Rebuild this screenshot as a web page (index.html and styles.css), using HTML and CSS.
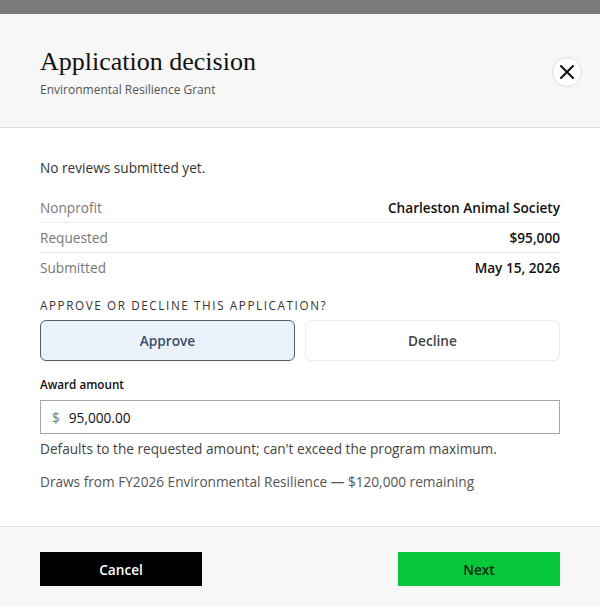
FILE: index.html
```html
<!DOCTYPE html>
<html lang="en">
<head>
<meta charset="utf-8">
<title>Application decision</title>
<link rel="stylesheet" href="styles.css">
</head>
<body>
<div class="modal">
  <header class="modal-header">
    <div class="heading">
      <h1 class="title">Application decision</h1>
      <p class="subtitle">Environmental Resilience Grant</p>
    </div>
    <button class="close" aria-label="Close">
      <svg width="14" height="14" viewBox="0 0 14 14"><path d="M1 1 L13 13 M13 1 L1 13" stroke="#111" stroke-width="2" stroke-linecap="round" fill="none"/></svg>
    </button>
  </header>
  <main class="modal-body">
    <p class="empty">No reviews submitted yet.</p>
    <dl class="facts">
      <div class="fact"><dt>Nonprofit</dt><dd>Charleston Animal Society</dd></div>
      <div class="fact"><dt>Requested</dt><dd>$95,000</dd></div>
      <div class="fact"><dt>Submitted</dt><dd>May 15, 2026</dd></div>
    </dl>
    <p class="question">APPROVE OR DECLINE THIS APPLICATION?</p>
    <div class="choices">
      <button class="choice selected">Approve</button>
      <button class="choice">Decline</button>
    </div>
    <label class="field-label">Award amount</label>
    <div class="input">
      <span class="currency">$</span>
      <span class="amount">95,000.00</span>
    </div>
    <p class="help">Defaults to the requested amount; can't exceed the program maximum.</p>
    <p class="draws">Draws from FY2026 Environmental Resilience — $120,000 remaining</p>
  </main>
  <footer class="modal-footer">
    <button class="btn btn-cancel">Cancel</button>
    <button class="btn btn-next">Next</button>
  </footer>
</div>
</body>
</html>
```
FILE: styles.css
```css
* { box-sizing: border-box; }
html, body { margin: 0; padding: 0; }
body {
  background: #7b7b7b;
  font-family: "Open Sans", "Noto Sans", sans-serif;
  color: #222;
  padding-top: 14px;
  height: 606px;
  overflow: hidden;
}
.modal {
  background: #fff;
  width: 600px;
  height: 592px;
  display: flex;
  flex-direction: column;
}
.modal-header {
  background: #f7f7f7;
  border-bottom: 1px solid #dedede;
  padding: 32px 18px 28px 40px;
  display: flex;
  align-items: center;
  justify-content: space-between;
}
.title {
  margin: 0;
  font-family: "Liberation Serif", "DejaVu Serif", serif;
  font-weight: 400;
  font-size: 26px;
  line-height: 32px;
  color: #111;
}
.subtitle {
  margin: 3px 0 0;
  font-size: 12px;
  line-height: 18px;
  color: #555;
}
.close {
  width: 30px;
  height: 30px;
  border-radius: 50%;
  border: 1px solid #dcdcdc;
  background: #fff;
  padding: 0;
  display: flex;
  align-items: center;
  justify-content: center;
  margin-bottom: 2px;
}
.modal-body {
  padding: 30px 40px 34px;
  border-bottom: 1px solid #e0e0e0;
}
.modal-body p { margin: 0; }
.empty {
  font-size: 13.65px;
  line-height: 20px;
  color: #333;
}
.facts {
  margin: 15px 0 0;
}
.fact {
  display: flex;
  justify-content: space-between;
  padding: 5px 0 4px;
  font-size: 13.65px;
  line-height: 20px;
  border-bottom: 1px solid #ececec;
}
.fact:last-child { border-bottom: none; }
.fact dt { color: #777; }
.fact dd { margin: 0; font-weight: 600; color: #111; }
.question {
  margin-top: 15px !important;
  font-size: 11.7px;
  line-height: 16px;
  letter-spacing: 1.6px;
  color: #333;
}
.choices {
  margin-top: 7px;
  display: grid;
  grid-template-columns: 1fr 1fr;
  gap: 10px;
}
.choice {
  height: 41px;
  border-radius: 6px;
  border: 1px solid #ececec;
  background: #fff;
  font-family: inherit;
  font-size: 13.65px;
  font-weight: 600;
  color: #444;
}
.choice.selected {
  background: #eaf2fb;
  border-color: #55606e;
  color: #3a4c6b;
}
.field-label {
  display: block;
  margin-top: 15px;
  font-size: 11.7px;
  line-height: 16px;
  font-weight: 600;
  color: #111;
}
.input {
  margin-top: 8px;
  height: 34px;
  border: 1px solid #a6a6a6;
  display: flex;
  align-items: center;
  padding: 0 11px;
  font-size: 13.65px;
}
.currency { color: #777; margin-right: 9px; }
.amount { color: #111; }
.help {
  margin-top: 5px !important;
  font-size: 13.65px;
  line-height: 20px;
  color: #444;
}
.draws {
  margin-top: 13px !important;
  font-size: 13.65px;
  line-height: 20px;
  color: #555;
}
.modal-footer {
  flex: 1;
  background: #f7f7f7;
  padding: 25px 40px 20px;
  display: flex;
  justify-content: space-between;
  align-items: flex-start;
}
.btn {
  width: 162px;
  height: 34px;
  border: none;
  font-family: inherit;
  font-size: 13.65px;
  font-weight: 600;
}
.btn-cancel { background: #000; color: #fff; }
.btn-next { background: #06c83a; color: #0b2a10; }
```
